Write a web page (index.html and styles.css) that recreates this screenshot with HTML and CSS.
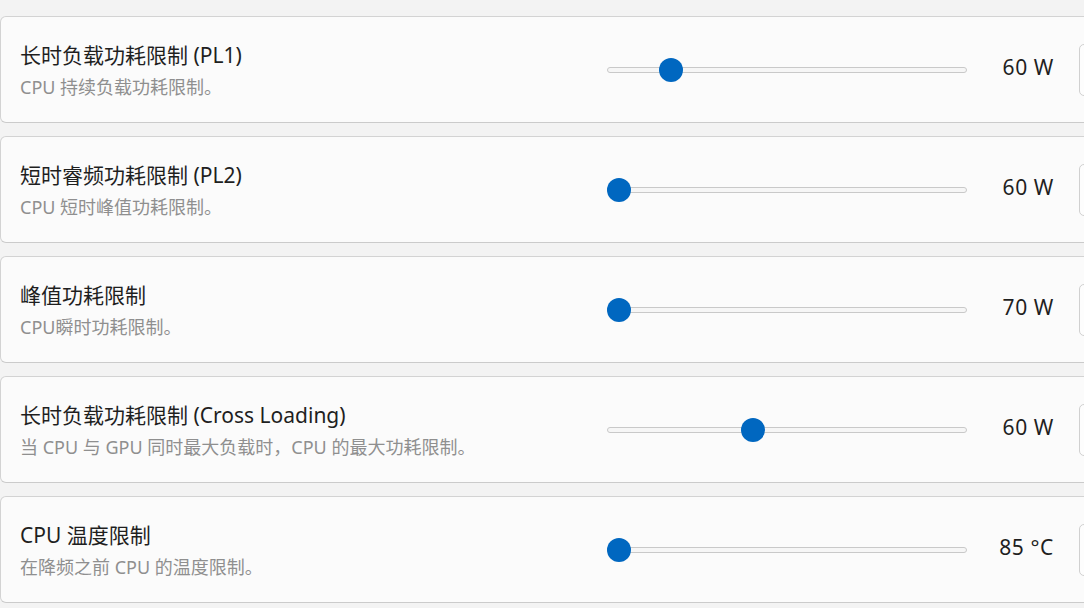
FILE: index.html
```html
<!DOCTYPE html>
<html lang="zh-CN">
<head>
<meta charset="utf-8">
<title>功耗限制</title>
<link rel="stylesheet" href="styles.css">
</head>
<body>
<div class="list">
  <div class="card">
    <div class="info">
      <div class="title">长时负载功耗限制 (PL1)</div>
      <div class="sub">CPU 持续负载功耗限制。</div>
    </div>
    <div class="slider"><div class="track"></div><div class="thumb" style="--p: 0.155"></div></div>
    <div class="value">60 W</div>
    <div class="box"></div>
  </div>
  <div class="card">
    <div class="info">
      <div class="title">短时睿频功耗限制 (PL2)</div>
      <div class="sub">CPU 短时峰值功耗限制。</div>
    </div>
    <div class="slider"><div class="track"></div><div class="thumb" style="--p: 0"></div></div>
    <div class="value">60 W</div>
    <div class="box"></div>
  </div>
  <div class="card">
    <div class="info">
      <div class="title">峰值功耗限制</div>
      <div class="sub">CPU瞬时功耗限制。</div>
    </div>
    <div class="slider"><div class="track"></div><div class="thumb" style="--p: 0"></div></div>
    <div class="value">70 W</div>
    <div class="box"></div>
  </div>
  <div class="card">
    <div class="info">
      <div class="title">长时负载功耗限制 (Cross Loading)</div>
      <div class="sub">当 CPU 与 GPU 同时最大负载时，CPU 的最大功耗限制。</div>
    </div>
    <div class="slider"><div class="track"></div><div class="thumb" style="--p: 0.4"></div></div>
    <div class="value">60 W</div>
    <div class="box"></div>
  </div>
  <div class="card">
    <div class="info">
      <div class="title">CPU 温度限制</div>
      <div class="sub">在降频之前 CPU 的温度限制。</div>
    </div>
    <div class="slider"><div class="track"></div><div class="thumb" style="--p: 0"></div></div>
    <div class="value">85 °C</div>
    <div class="box"></div>
  </div>
</div>
</body>
</html>
```

FILE: styles.css
```css
html, body {
  margin: 0;
  padding: 0;
  background: #f3f3f3;
  overflow: hidden;
  width: 1084px;
  height: 608px;
}
body {
  font-family: "Segoe UI", "Noto Sans", "Noto Sans CJK SC", sans-serif;
  color: #1b1b1b;
}
.list {
  display: flex;
  flex-direction: column;
  gap: 13px;
  padding-top: 16px;
  width: 1160px;
}
.card {
  box-sizing: border-box;
  height: 107px;
  border: 1px solid #d3d3d3;
  border-bottom-color: #cbcbcb;
  border-radius: 6px;
  background: #fbfbfb;
  display: flex;
  align-items: center;
  padding-left: 19px;
}
.info {
  flex: 0 0 587px;
  display: flex;
  flex-direction: column;
}
.title {
  font-size: 21px;
  line-height: 28px;
  color: #1f1f1f;
  white-space: nowrap;
}
.sub {
  font-size: 18px;
  line-height: 24px;
  margin-top: 6px;
  color: #8f8f8f;
  white-space: nowrap;
}
.slider {
  flex: 0 0 360px;
  height: 24px;
  position: relative;
  margin-top: 1px;
}
.track {
  position: absolute;
  left: 0;
  right: 0;
  top: 9px;
  height: 6px;
  box-sizing: border-box;
  border: 1.5px solid #c9c9c9;
  border-radius: 3px;
  background: #f6f6f6;
}
.thumb {
  position: absolute;
  top: 0;
  left: calc(var(--p, 0) * (100% - 24px));
  width: 24px;
  height: 24px;
  border-radius: 50%;
  background: #0067c0;
}
.value {
  flex: 0 0 87px;
  text-align: right;
  font-size: 21px;
  letter-spacing: 0.6px;
  line-height: 28px;
  margin-top: -5px;
  color: #1f1f1f;
  white-space: nowrap;
}
.box {
  flex: 0 0 80px;
  margin-left: 25px;
  height: 52px;
  box-sizing: border-box;
  border: 1px solid #d0d0d0;
  border-radius: 5px;
  background: #fdfdfd;
}
```
